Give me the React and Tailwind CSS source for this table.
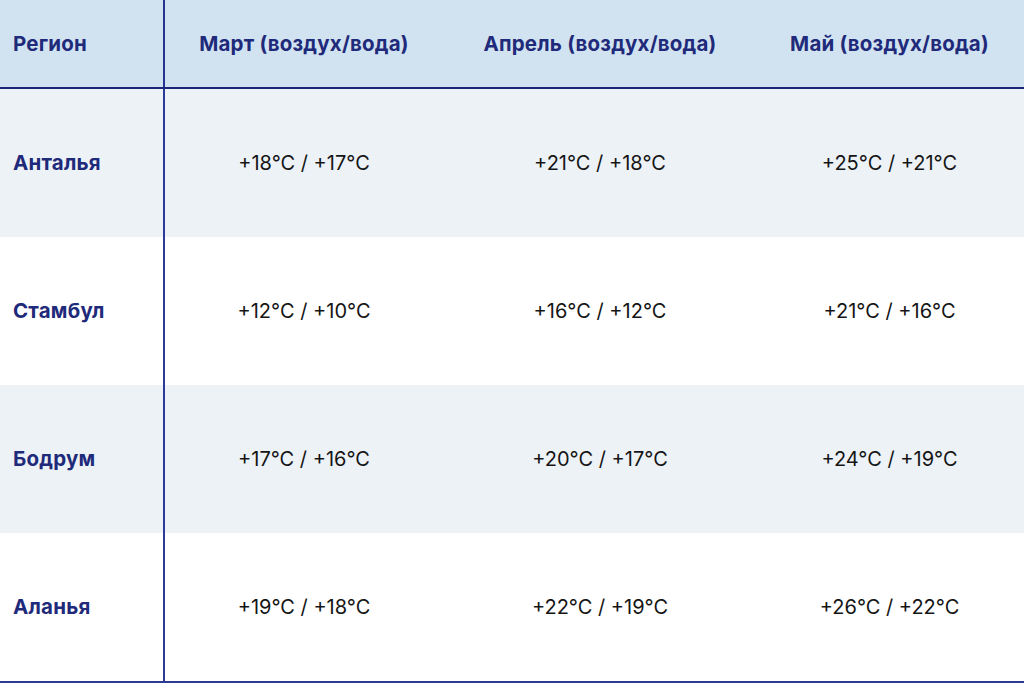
import React from 'react';

const rows = [
  { region: 'Анталья', mar: '+18°C / +17°C', apr: '+21°C / +18°C', may: '+25°C / +21°C' },
  { region: 'Стамбул', mar: '+12°C / +10°C', apr: '+16°C / +12°C', may: '+21°C / +16°C' },
  { region: 'Бодрум', mar: '+17°C / +16°C', apr: '+20°C / +17°C', may: '+24°C / +19°C' },
  { region: 'Аланья', mar: '+19°C / +18°C', apr: '+22°C / +19°C', may: '+26°C / +22°C' },
];

const grid = 'grid grid-cols-[163px_2px_278px_314px_265px]';

const App = () => {
  return (
    <div className="w-[1024px] h-[684px] bg-white font-['Inter',sans-serif]">
      {/* Header */}
      <div className={`${grid} h-[87px] bg-[#d1e3f1] text-[#1f2a7a] font-bold text-[20.5px] tracking-[0.2px]`}>
        <div className="flex items-center pl-[13px] pt-[2px]">Регион</div>
        <div className="bg-[#26348f]" />
        <div className="flex items-center justify-center pt-[2px]">Март (воздух/вода)</div>
        <div className="flex items-center justify-center pt-[2px]">Апрель (воздух/вода)</div>
        <div className="flex items-center justify-center pt-[2px]">Май (воздух/вода)</div>
      </div>
      <div className="h-[2px] bg-[#1c2677]" />

      {/* Rows */}
      {rows.map((r, i) => (
        <div
          key={r.region}
          className={`${grid} h-[148px] ${i % 2 === 0 ? 'bg-[#edf2f7]' : 'bg-white'}`}
        >
          <div className="pt-[62px] pl-[13px] text-[20.5px] tracking-[0.2px] font-bold text-[#1f2a7a] leading-[24px]">
            {r.region}
          </div>
          <div className="bg-[#2b3a98]" />
          <div className="pt-[62px] text-center text-[20px] text-[#151515] leading-[24px]">{r.mar}</div>
          <div className="pt-[62px] text-center text-[20px] text-[#151515] leading-[24px]">{r.apr}</div>
          <div className="pt-[62px] text-center text-[20px] text-[#151515] leading-[24px]">{r.may}</div>
        </div>
      ))}
      <div className="h-[2px] bg-[#2b3a98]" />
    </div>
  );
};

export default App;
